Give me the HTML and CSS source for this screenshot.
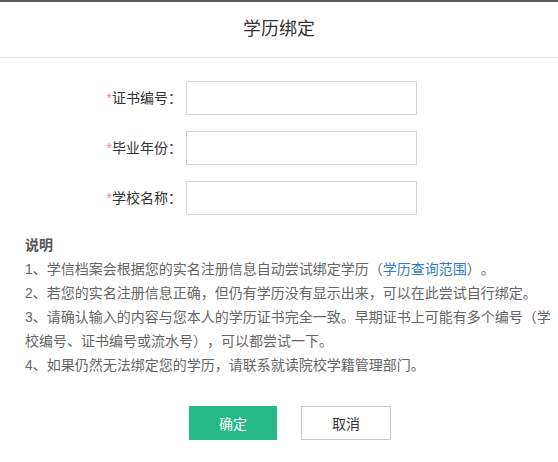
FILE: index.html
```html
<!DOCTYPE html>
<html lang="zh-CN">

    <head>
        <meta charset="UTF-8">
        <meta name="viewport" content="width=device-width, initial-scale=1.0">
        <title>学历绑定</title>
        <link rel="stylesheet" href="styles.css">
    </head>

    <body>
        <div id="dialog">
            <div class="dialog-header">学历绑定</div>

            <div class="bind-form">
                <label class="form-label"><span class="required">*</span>证书编号：</label>
                <input type="text" class="form-input">

                <label class="form-label"><span class="required">*</span>毕业年份：</label>
                <input type="text" class="form-input">

                <label class="form-label"><span class="required">*</span>学校名称：</label>
                <input type="text" class="form-input">
            </div>

            <div class="notes">
                <div class="notes-title">说明</div>
                <p>1、学信档案会根据您的实名注册信息自动尝试绑定学历（<a href="#">学历查询范围</a>）。</p>
                <p>2、若您的实名注册信息正确，但仍有学历没有显示出来，可以在此尝试自行绑定。</p>
                <p>3、请确认输入的内容与您本人的学历证书完全一致。早期证书上可能有多个编号（学校编号、证书编号或流水号），可以都尝试一下。</p>
                <p>4、如果仍然无法绑定您的学历，请联系就读院校学籍管理部门。</p>
            </div>

            <div class="actions">
                <button class="btn btn-primary">确定</button>
                <button class="btn btn-default">取消</button>
            </div>
        </div>
    </body>

</html>
```

FILE: styles.css
```css
html {
    height: 100%;
}

body {
    margin: 0px;
    font-family: "Liberation Sans", "Noto Sans CJK SC", sans-serif;
    font-size: 14px;
    color: #666;
    background: #fff;
    text-spacing-trim: space-all;
}

body * {
    box-sizing: border-box;
}

#dialog {
    border-top: 2px solid #5c5c5c;
}

.dialog-header {
    height: 56px;
    line-height: 55px;
    text-align: center;
    font-size: 18px;
    color: #333;
    border-bottom: 1px solid #e3e3e3;
}

.bind-form {
    display: grid;
    grid-template-columns: 182px 231px;
    column-gap: 4px;
    row-gap: 16px;
    padding-top: 23px;
}

.form-label {
    height: 34px;
    line-height: 34px;
    text-align: right;
    color: #333;
}

.required {
    color: #f28b8b;
}

.form-input {
    height: 34px;
    margin: 0px;
    padding: 0px 8px;
    border: 1px solid #d6d6d6;
    border-radius: 0px;
    outline: none;
    font: inherit;
}

.notes {
    width: 557px;
    margin-top: 18px;
    padding-left: 25px;
    line-height: 24px;
}

.notes-title {
    font-weight: bold;
    color: #555;
}

.notes p {
    margin: 0px;
}

.notes a {
    color: #2d7dcc;
    text-decoration: none;
}

.actions {
    display: flex;
    gap: 24px;
    margin-top: 29px;
    padding-left: 189px;
}

.btn {
    height: 34px;
    margin: 0px;
    padding: 0px;
    font: inherit;
    border-radius: 0px;
    cursor: pointer;
}

.btn-primary {
    width: 88px;
    color: #fff;
    background: #26b987;
    border: none;
}

.btn-default {
    width: 90px;
    color: #333;
    background: #fff;
    border: 1px solid #c8c8c8;
}
```
